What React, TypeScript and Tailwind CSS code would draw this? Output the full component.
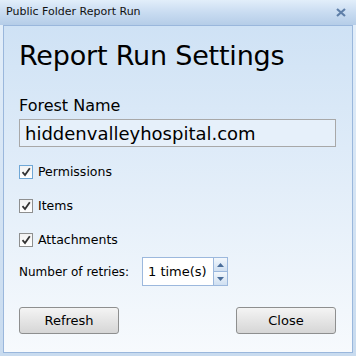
import React from "react";

function Check({ focused }: { focused?: boolean }) {
  return (
    <div
      className={`w-[14px] h-[14px] border ${focused ? "border-[#6fa7d6]" : "border-[#8e8f8f]"} bg-gradient-to-b from-[#f2f2f2] to-[#ffffff] flex items-center justify-center`}
    >
      <svg width="10" height="10" viewBox="0 0 10 10">
        <path d="M1.5 5.2 L4 8 L8.8 1.2" stroke="#333" strokeWidth="1.8" fill="none" />
      </svg>
    </div>
  );
}

export default function App() {
  return (
    <div
      className="w-[356px] h-[356px] bg-gradient-to-b from-[#e4effa] to-[#c8dbef] flex flex-col text-[#000]"
      style={{ fontFamily: '"DejaVu Sans", Verdana, sans-serif' }}
    >
      <div className="h-[25px] flex items-center justify-between pl-[6px] pr-[10px] bg-gradient-to-b from-[#e2eefa] via-[#c9dcf1] to-[#b5cde8]">
        <span className="text-[11px] text-[#111]">Public Folder Report Run</span>
        <svg width="10" height="9" viewBox="0 0 10 9">
          <path d="M1 1 L9 8 M9 1 L1 8" stroke="#5f7fa8" strokeWidth="2.2" />
        </svg>
      </div>
      <div className="mx-[3px] mb-[3px] flex-1 border border-[#9ab7dc] bg-gradient-to-b from-[#cfe2f5] to-[#f7fafd] px-[15px] flex flex-col">
        <div className="text-[27px] leading-none mt-[16px] tracking-[-0.2px]">Report Run Settings</div>
        <div className="text-[16px] leading-none mt-[29px]">Forest Name</div>
        <div className="mt-[5px] h-[28px] w-[317px] border border-[#a8a8a8] bg-[#e6f0fa] flex items-center px-[5px] text-[18px]">
          hiddenvalleyhospital.com
        </div>
        <div className="flex items-center gap-[5px] mt-[15px] h-[20px] text-[12.5px]">
          <Check focused />
          <span>Permissions</span>
        </div>
        <div className="flex items-center gap-[5px] mt-[14px] h-[20px] text-[12.5px]">
          <Check />
          <span>Items</span>
        </div>
        <div className="flex items-center gap-[5px] mt-[14px] h-[20px] text-[12.5px]">
          <Check />
          <span>Attachments</span>
        </div>
        <div className="flex items-center mt-[7px] text-[12px]">
          <span className="w-[123px]">Number of retries:</span>
          <div className="flex h-[29px] border border-[#9cb8dd] bg-white">
            <div className="w-[70px] flex items-center px-[5px] text-[13px]">1 time(s)</div>
            <div className="flex flex-col w-[14px]">
              <div className="flex-1 border-l border-b border-[#9cb8dd] bg-gradient-to-b from-[#f2f7fc] to-[#cfdff1] flex items-center justify-center">
                <svg width="7" height="4" viewBox="0 0 7 4"><path d="M0 4 L3.5 0 L7 4 Z" fill="#4a6d9a" /></svg>
              </div>
              <div className="flex-1 border-l border-[#9cb8dd] bg-gradient-to-b from-[#f2f7fc] to-[#cfdff1] flex items-center justify-center">
                <svg width="7" height="4" viewBox="0 0 7 4"><path d="M0 0 L3.5 4 L7 0 Z" fill="#4a6d9a" /></svg>
              </div>
            </div>
          </div>
        </div>
        <div className="flex justify-between mt-[21px] pr-[1px]">
          <button className="w-[100px] h-[27px] rounded-[3px] border border-[#8e8f8f] bg-gradient-to-b from-[#f4f4f4] to-[#d6d6d6] text-[13px]">
            Refresh
          </button>
          <button className="w-[100px] h-[27px] rounded-[3px] border border-[#8e8f8f] bg-gradient-to-b from-[#f4f4f4] to-[#d6d6d6] text-[13px]">
            Close
          </button>
        </div>
      </div>
    </div>
  );
}
